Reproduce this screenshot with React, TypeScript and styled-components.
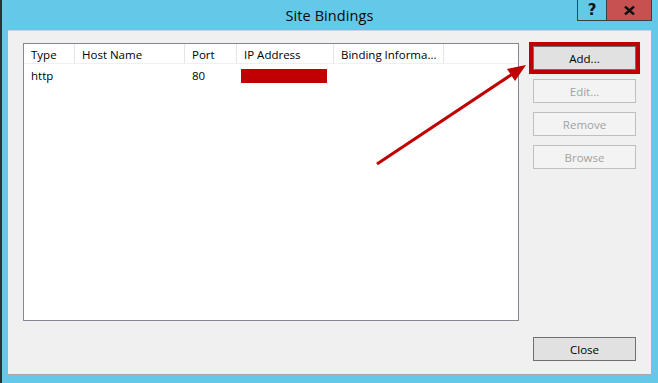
import React from "react";
import styled, { createGlobalStyle } from "styled-components";

const GlobalStyle = createGlobalStyle`
  html, body { margin: 0; padding: 0; background: #ffffff; }
  * { box-sizing: border-box; }
`;

const Frame = styled.div`
  position: relative;
  width: 658px;
  height: 383px;
  background: #64c9e8;
  border-left: 2px solid #2a3138;
  padding: 0 7px 8px 6px;
  display: flex;
  flex-direction: column;
  font-family: "Open Sans", "Noto Sans", sans-serif;
  font-size: 11.5px;
  color: #000;
  overflow: hidden;
`;

const TitleBar = styled.div`
  height: 30px;
  display: grid;
  grid-template-columns: 1fr auto 1fr;
`;

const Title = styled.div`
  grid-column: 2;
  font-size: 14.5px;
  line-height: 31px;
  color: #0a0a0a;
  letter-spacing: 0.1px;
`;

const Caption = styled.div`
  grid-column: 3;
  justify-self: end;
  align-self: start;
  display: flex;
  margin-right: -1px;
  border: 1px solid #3a3f44;
  border-top: none;
`;

const CaptionButton = styled.div<{ $close?: boolean }>`
  width: ${(p) => (p.$close ? "45px" : "28px")};
  height: 20px;
  background: ${(p) => (p.$close ? "#c75050" : "#64c9e8")};
  border-left: ${(p) => (p.$close ? "1px solid #3a3f44" : "none")};
  display: flex;
  align-items: center;
  justify-content: center;
  font-family: "DejaVu Sans", sans-serif;
  font-weight: bold;
  font-size: 15px;
  color: #111;
`;

const Client = styled.div`
  flex: 1;
  background: #f0f0f0;
  border-top: 1px solid #c9d3d8;
  border-bottom: 1px solid #a9a9a9;
  display: grid;
  grid-template-columns: 496px 103px;
  column-gap: 14px;
  padding: 12px 15px 13px 15px;
`;

const ListView = styled.div`
  height: 278px;
  background: #ffffff;
  border: 1px solid #828790;
  display: flex;
  flex-direction: column;
`;

const COLS = "51px 110px 52px 97px 110px";

const HeaderRow = styled.div`
  display: grid;
  grid-template-columns: ${COLS};
  height: 20px;
  border-bottom: 1px solid #f0f0f0;
`;

const HeaderCell = styled.div`
  padding: 1px 0 0 7px;
  line-height: 19px;
  border-right: 1px solid #e5e5e5;
  white-space: nowrap;
  overflow: hidden;
`;

const DataRow = styled.div`
  display: grid;
  grid-template-columns: ${COLS};
  height: 19px;
  margin-top: 2px;
`;

const Cell = styled.div`
  padding-left: 7px;
  line-height: 19px;
  white-space: nowrap;
  display: flex;
  align-items: center;
`;

const Redacted = styled.div`
  width: 86px;
  height: 14px;
  margin-left: -3px;
  background: #c00000;
`;

const ButtonColumn = styled.div`
  display: flex;
  flex-direction: column;
  gap: 9px;
  padding-top: 3px;
`;

const Button = styled.div<{ $disabled?: boolean; $highlight?: boolean }>`
  height: 24px;
  display: flex;
  align-items: center;
  justify-content: center;
  background: ${(p) => (p.$disabled ? "#f3f3f3" : "#e1e1e1")};
  border: 1px solid ${(p) => (p.$disabled ? "#bfbfbf" : "#707070")};
  color: ${(p) => (p.$disabled ? "#a2a2a2" : "#000")};
  ${(p) => (p.$highlight ? "outline: 4px solid #c00000; outline-offset: 0px;" : "")}
`;

const CloseButton = styled(Button)`
  margin-top: auto;
`;

const Overlay = styled.svg`
  position: absolute;
  left: 0;
  top: 0;
  width: 658px;
  height: 383px;
  pointer-events: none;
`;

const columns = ["Type", "Host Name", "Port", "IP Address", "Binding Informa..."];

export default function App() {
  return (
    <>
      <GlobalStyle />
      <Frame>
        <TitleBar>
          <Title>Site Bindings</Title>
          <Caption>
            <CaptionButton>?</CaptionButton>
            <CaptionButton $close>
              <svg width="11" height="9" viewBox="0 0 11 9">
                <path d="M1 0.5 L10 8.5 M10 0.5 L1 8.5" stroke="#111" strokeWidth="2.4" />
              </svg>
            </CaptionButton>
          </Caption>
        </TitleBar>
        <Client>
          <ListView>
            <HeaderRow>
              {columns.map((c) => (
                <HeaderCell key={c}>{c}</HeaderCell>
              ))}
            </HeaderRow>
            <DataRow>
              <Cell>http</Cell>
              <Cell />
              <Cell>80</Cell>
              <Cell>
                <Redacted />
              </Cell>
              <Cell />
            </DataRow>
          </ListView>
          <ButtonColumn>
            <Button $highlight>Add...</Button>
            <Button $disabled>Edit...</Button>
            <Button $disabled>Remove</Button>
            <Button $disabled>Browse</Button>
            <CloseButton>Close</CloseButton>
          </ButtonColumn>
        </Client>
        <Overlay viewBox="0 0 658 383">
          <line x1="375" y1="164" x2="512" y2="73" stroke="#c00000" strokeWidth="3" />
          <polygon points="524,65 505,69 513,81" fill="#c00000" />
        </Overlay>
      </Frame>
    </>
  );
}
